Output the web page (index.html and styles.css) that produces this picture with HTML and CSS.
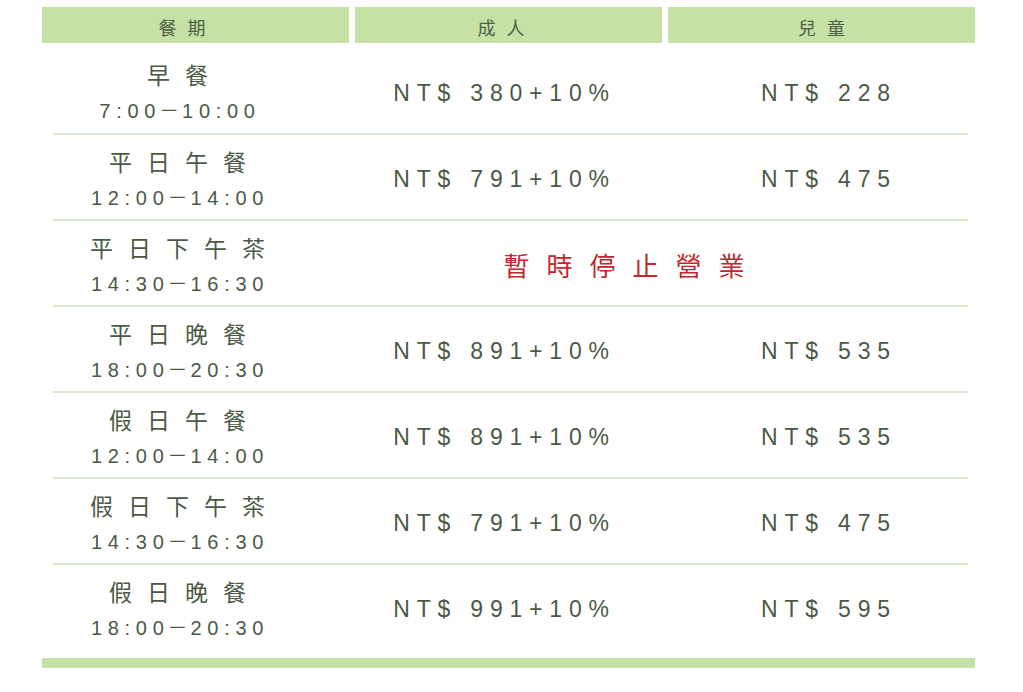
FILE: index.html
```html
<!DOCTYPE html>
<html lang="zh-Hant">
<head>
<meta charset="utf-8">
<title>餐期價格</title>
<link rel="stylesheet" href="styles.css">
</head>
<body>
<div class="table">
  <div class="head">
    <div class="hcell c1">餐期</div>
    <div class="hcell c2">成人</div>
    <div class="hcell c3">兒童</div>
  </div>
  <div class="rows">
    <div class="row first">
      <div class="meal"><div class="name">早餐</div><div class="time">7:00<span class="dash">－</span>10:00</div></div>
      <div class="adult">NT$ 380+10%</div>
      <div class="child">NT$ 228</div>
    </div>
    <div class="row">
      <div class="meal"><div class="name">平日午餐</div><div class="time">12:00<span class="dash">－</span>14:00</div></div>
      <div class="adult">NT$ 791+10%</div>
      <div class="child">NT$ 475</div>
    </div>
    <div class="row">
      <div class="meal"><div class="name">平日下午茶</div><div class="time">14:30<span class="dash">－</span>16:30</div></div>
      <div class="closed">暫時停止營業</div>
    </div>
    <div class="row">
      <div class="meal"><div class="name">平日晚餐</div><div class="time">18:00<span class="dash">－</span>20:30</div></div>
      <div class="adult">NT$ 891+10%</div>
      <div class="child">NT$ 535</div>
    </div>
    <div class="row">
      <div class="meal"><div class="name">假日午餐</div><div class="time">12:00<span class="dash">－</span>14:00</div></div>
      <div class="adult">NT$ 891+10%</div>
      <div class="child">NT$ 535</div>
    </div>
    <div class="row">
      <div class="meal"><div class="name">假日下午茶</div><div class="time">14:30<span class="dash">－</span>16:30</div></div>
      <div class="adult">NT$ 791+10%</div>
      <div class="child">NT$ 475</div>
    </div>
    <div class="row last">
      <div class="meal"><div class="name">假日晚餐</div><div class="time">18:00<span class="dash">－</span>20:30</div></div>
      <div class="adult">NT$ 991+10%</div>
      <div class="child">NT$ 595</div>
    </div>
  </div>
  <div class="foot"></div>
</div>
</body>
</html>
```

FILE: styles.css
```css
html, body {
  margin: 0;
  padding: 0;
  background: #ffffff;
}

body {
  font-family: "Liberation Sans", "Noto Sans CJK TC", sans-serif;
  color: #4b5a45;
}

.table {
  width: 933px;
  margin: 7px 0 0 42px;
}

.head {
  display: grid;
  grid-template-columns: 307px 307px 307px;
  column-gap: 6px;
  height: 36px;
}

.hcell {
  background: #c5e1a5;
  display: flex;
  align-items: center;
  justify-content: center;
  padding-top: 3px;
  box-sizing: border-box;
  font-family: "Noto Sans CJK TC", sans-serif;
  font-size: 18px;
  letter-spacing: 11px;
  color: #4f5e48;
}

.hcell.c1 {
  padding-right: 16px;
}

.hcell.c2 {
  padding-right: 4px;
}

.hcell.c3 {
  padding-left: 11px;
}

.rows {
  margin: 0 7px 0 11px;
}

.row {
  display: grid;
  grid-template-columns: 296px 307px 300px;
  column-gap: 6px;
  align-items: center;
  height: 86px;
  box-sizing: border-box;
  padding-top: 4px;
  border-bottom: 2px solid #dbeacd;
}

.row.first {
  height: 92px;
  padding-top: 9px;
}

.row.last {
  border-bottom-color: transparent;
}

.meal {
  display: flex;
  flex-direction: column;
  align-items: center;
  padding-right: 44px;
}

.name {
  font-family: "Noto Sans CJK TC", sans-serif;
  font-size: 23px;
  line-height: 36px;
  letter-spacing: 15px;
  padding-left: 12px;
}

.time {
  font-size: 20px;
  line-height: 36px;
  letter-spacing: 5.7px;
  padding-left: 2px;
  white-space: nowrap;
}

.dash {
  font-family: "Noto Sans CJK TC", sans-serif;
  font-size: 20px;
  letter-spacing: 3px;
  margin-left: -2px;
}

.adult,
.child {
  text-align: center;
  font-size: 23px;
  line-height: 30px;
  letter-spacing: 6.8px;
  white-space: nowrap;
}

.adult {
  padding-right: 8px;
}

.child {
  padding-left: 22px;
}

.closed {
  grid-column: 2 / 4;
  text-align: center;
  font-family: "Noto Sans CJK TC", sans-serif;
  font-size: 26px;
  line-height: 30px;
  letter-spacing: 17px;
  color: #c1272d;
  padding-right: 58px;
}

.foot {
  height: 10px;
  margin-top: 7px;
  background: #c5e1a5;
}
```
